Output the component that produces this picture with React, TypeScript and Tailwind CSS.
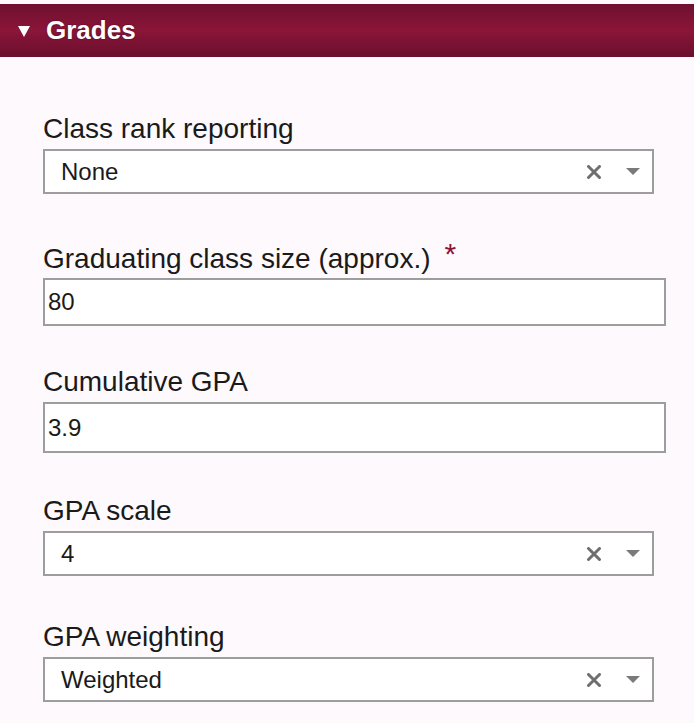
import { useState } from "react";

type Field = {
  label: string;
  value: string;
  kind: "select" | "input";
  required?: boolean;
  h: string;
  mb: string;
};

const fields: Field[] = [
  { label: "Class rank reporting", value: "None", kind: "select", h: "h-[45px]", mb: "mb-[48px]" },
  { label: "Graduating class size (approx.)", value: "80", kind: "input", required: true, h: "h-[48px]", mb: "mb-[40px]" },
  { label: "Cumulative GPA", value: "3.9", kind: "input", h: "h-[51px]", mb: "mb-[42px]" },
  { label: "GPA scale", value: "4", kind: "select", h: "h-[45px]", mb: "mb-[45px]" },
  { label: "GPA weighting", value: "Weighted", kind: "select", h: "h-[45px]", mb: "mb-[20px]" },
];

function ClearIcon() {
  return (
    <svg width="16" height="14" viewBox="0 0 16 14">
      <path d="M2.5 1.5 L13.5 12.5 M13.5 1.5 L2.5 12.5" stroke="#6f6f6f" strokeWidth="3" strokeLinecap="round" />
    </svg>
  );
}

function Caret() {
  return (
    <svg width="14" height="7" viewBox="0 0 14 7">
      <path d="M0 0 H14 L7 7 Z" fill="#7a7a7a" />
    </svg>
  );
}

export default function App() {
  const [open, setOpen] = useState(true);

  return (
    <div className="min-h-[723px] bg-[#fdf9fc] pt-1" style={{ fontFamily: '"Liberation Sans", Arial, sans-serif' }}>
      {/* Header */}
      <button
        onClick={() => setOpen(!open)}
        className="flex h-[53px] w-full items-center bg-gradient-to-b from-[#6f1030] via-[#8b1538] to-[#6a0f2e] pl-[18px] text-left"
      >
        <svg width="12" height="11" viewBox="0 0 12 11" className="mr-[16px] mt-[1px]">
          <path d="M0 0 H12 L6 11 Z" fill="#fff" />
        </svg>
        <span className="text-[26px] font-bold text-white [text-shadow:0_0_2px_rgba(0,0,0,.5)]">Grades</span>
      </button>

      {open && (
        <div className="pl-[43px] pt-[56px]">
          {fields.map(f => (
            <div key={f.label} className={f.mb}>
              <div className="mb-[4px] h-[32px] text-[28px] leading-[32px] text-[#1a1a1a]">
                {f.label}
                {f.required && (
                  <span className="relative -top-[4px] ml-[14px] text-[30px] text-[#8b1538]">*</span>
                )}
              </div>
              {f.kind === "select" ? (
                <div className={`flex ${f.h} w-[611px] items-center border-2 border-[#9d9d9d] bg-white pl-[16px] pr-[12px]`}>
                  <span className="flex-1 text-[24px] text-[#1a1a1a]">{f.value}</span>
                  <span className="mr-[24px] flex items-center"><ClearIcon /></span>
                  <Caret />
                </div>
              ) : (
                <div className={`flex ${f.h} w-[623px] items-center border-2 border-[#9d9d9d] bg-white pl-[3px]`}>
                  <span className="text-[24px] text-[#1a1a1a]">{f.value}</span>
                </div>
              )}
            </div>
          ))}
        </div>
      )}
    </div>
  );
}
